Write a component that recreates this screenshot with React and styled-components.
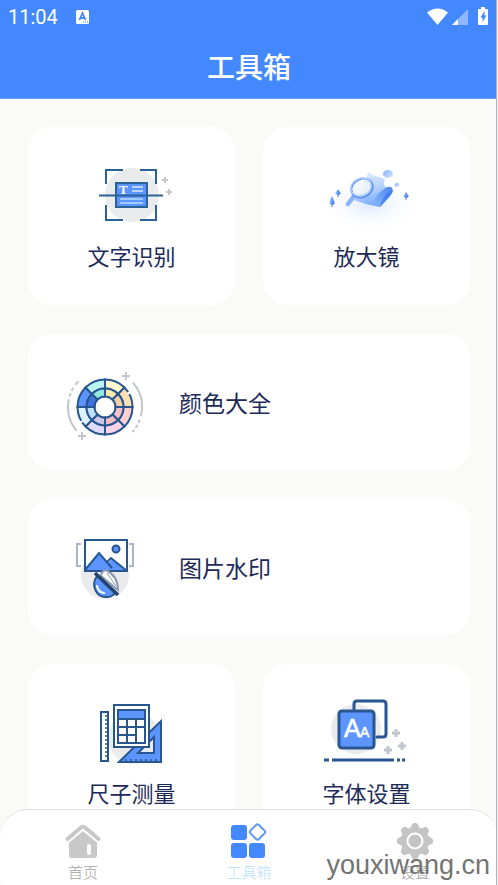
import React from 'react'
import styled, { createGlobalStyle } from 'styled-components'

const BLUE = '#4488ff'
const FILL = '#5c95ff'
const STROKE = '#28568f'
const GREY = '#c3c6cd'
const DISC = '#e9ebed'

const GlobalStyle = createGlobalStyle`
  * {
    box-sizing: border-box;
  }

  body {
    margin: 0;
    background: #fafaf8;
    font-family: 'Noto Sans CJK SC', sans-serif;
  }
`

const Page = styled.div`
  height: 100vh;
  display: flex;
  flex-direction: column;
  overflow: hidden;
  position: relative;
`

const ScreenEdge = styled.div`
  position: absolute;
  top: 0;
  right: 0;
  bottom: 0;
  width: 2px;
  border-left: 1px solid #b4b6ba;
  background: #ececec;
`

const Header = styled.header`
  flex: none;
  background: ${BLUE};
  color: #fff;
  border-bottom: 1px solid #6ea1fd;
`

const StatusBar = styled.div`
  display: flex;
  align-items: center;
  height: 34px;
  padding: 0 10px 0 8px;
`

const Clock = styled.span`
  font: 400 20px/34px Roboto, sans-serif;
  margin-right: 18px;
`

const StatusIcons = styled.div`
  margin-left: auto;
  display: flex;
  align-items: center;
`

const Title = styled.h1`
  margin: 0;
  font-size: 28px;
  font-weight: 500;
  line-height: 64px;
  text-align: center;
`

const Tools = styled.main`
  flex: 1;
  min-height: 0;
  overflow: hidden;
  display: grid;
  grid-template-columns: 1fr 1fr;
  align-content: start;
  gap: 29px 28px;
  padding: 28px;
`

const Card = styled.button`
  display: flex;
  align-items: center;
  border: 0;
  border-radius: 24px;
  background: #fff;
  color: #1d2a58;
  font-family: inherit;
  cursor: pointer;
  grid-column: ${({ $wide }) => ($wide ? 'span 2' : 'auto')};
  flex-direction: ${({ $wide }) => ($wide ? 'row' : 'column')};
  gap: ${({ $wide }) => ($wide ? '24px' : '4px')};
  height: ${({ $wide }) => ($wide ? '136px' : '178px')};
  padding: ${({ $wide }) => ($wide ? '0 28px' : '28px 0 0')};
  font-size: ${({ $wide }) => ($wide ? '23px' : '22px')};
  line-height: 32px;
`

const Art = styled.svg.attrs({ viewBox: '0 0 99 80', 'aria-hidden': true })`
  flex: none;
  width: 99px;
  height: 80px;
  fill: none;
`

const TabBar = styled.nav`
  position: absolute;
  left: 0;
  right: 0;
  bottom: 0;
  display: grid;
  grid-template-columns: repeat(3, 1fr);
  height: 76px;
  border-top: 1px solid #dededf;
  border-radius: 28px 28px 6px 6px;
  background: #fff;
`

const Tab = styled.a`
  display: flex;
  flex-direction: column;
  align-items: center;
  gap: 3px;
  padding-top: 13px;
  font-size: 15px;
  font-weight: 300;
  line-height: 20px;
  text-decoration: none;
  color: ${({ $active }) => ($active ? '#b9e2fb' : '#a3a3a3')};

  svg {
    width: 36px;
    height: 36px;
    fill: none;
  }
`

const Watermark = styled.span`
  position: absolute;
  right: 8px;
  bottom: 4px;
  font: 27px/32px 'Liberation Sans', sans-serif;
  color: #747474;
`

const Plus = ({ x, y, r = 3, w = 2, color = GREY }) => (
  <path d={`M${x - r} ${y}h${2 * r}M${x} ${y - r}v${2 * r}`} stroke={color} strokeWidth={w} />
)

const TextScanArt = () => (
  <Art>
    <circle cx="50" cy="40" r="27" fill={DISC} />
    <rect x="34" y="28" width="31" height="24" fill={FILL} stroke="#2a6298" strokeWidth="2" />
    <path
      d="M24 29V15h17M58 15h16v14M74 50v15H58M41 65H24V50"
      stroke="#2a6298"
      strokeWidth="2"
    />
    <text x="37" y="39" fill="#fff" fontFamily="Liberation Serif, serif" fontWeight="700" fontSize="13">
      T
    </text>
    <path d="M50 32h11M50 36h11" stroke="#d9e7ff" strokeWidth="1.4" />
    <path d="M38 44h23M38 48h23" stroke="#b9dcff" strokeWidth="1.6" />
    <path d="M17 40.500H81" stroke="#2a6298" strokeWidth="2" />
    <Plus x={83} y={25} />
    <Plus x={87} y={37} />
  </Art>
)

const Tree = ({ x, y, h }) => (
  <g>
    <path
      d={`M${x} ${y - h}C${x + 2} ${y - h / 2} ${x + 3} ${y - 2} ${x + 2.5} ${y - 1}Q${x} ${y + 1} ${x - 2.5} ${y - 1}C${x - 3} ${y - 2} ${x - 2} ${y - h / 2} ${x} ${y - h}Z`}
      fill="url(#tree)"
    />
    <path d={`M${x} ${y - 2}v4`} stroke="#4b7bd8" strokeWidth="1" />
  </g>
)

const MagnifierArt = () => (
  <Art>
    <defs>
      <radialGradient id="ground" cx="0.5" cy="0.35" r="0.6">
        <stop offset="0" stopColor="#dbe8ff" />
        <stop offset="1" stopColor="#fff" stopOpacity="0" />
      </radialGradient>
      <linearGradient id="sheet" x1="0.3" y1="0" x2="0.6" y2="1">
        <stop offset="0" stopColor="#e3efff" />
        <stop offset="0.5" stopColor="#b4d0ff" />
        <stop offset="1" stopColor="#6ea2fc" />
      </linearGradient>
      <linearGradient id="roll" x1="1" y1="0" x2="0" y2="1">
        <stop offset="0" stopColor="#4b86f0" />
        <stop offset="1" stopColor="#8ab8ff" />
      </linearGradient>
      <linearGradient id="ball" x1="0" y1="0" x2="1" y2="1">
        <stop offset="0" stopColor="#7faefb" />
        <stop offset="1" stopColor="#deeaff" />
      </linearGradient>
      <linearGradient id="tree" x1="0" x2="1">
        <stop offset="0" stopColor="#9cc2ff" />
        <stop offset="1" stopColor="#3e79ea" />
      </linearGradient>
    </defs>
    <ellipse cx="53" cy="56" rx="42" ry="24" fill="url(#ground)" />
    <path d="M51 17Q59 22 68 24Q64 34 74 32L63 52Q50 50 37 45Q46 36 51 17Z" fill="url(#sheet)" />
    <path d="M57 47Q59 39 66 35Q70 31 74 32Q77 34 75 38Q72 43 63 52Q58 51 57 47Z" fill="url(#roll)" />
    <path d="M63 52Q66 39 75 35Q77 36 73 41Z" fill="#3a77e8" opacity="0.7" />
    <path d="M52 23l12 3M55 27l8 2" stroke="#c6dbff" strokeWidth="1" />
    <path d="M37 41l-6 8" stroke="#8ab4fb" strokeWidth="4.500" strokeLinecap="round" />
    <ellipse cx="45" cy="33" rx="11" ry="9" transform="rotate(-24 45 33)" fill="#f1f6ff" fillOpacity="0.85" stroke="#5e93ef" strokeWidth="2" />
    <ellipse cx="44" cy="32" rx="10.500" ry="8.500" transform="rotate(-24 44 32)" stroke="#b3cffe" strokeWidth="1.500" />
    <ellipse cx="71" cy="19" rx="5" ry="4" fill="url(#ball)" />
    <ellipse cx="80" cy="30" rx="2.500" ry="2" fill="url(#ball)" />
    <Tree x={15} y={50} h={9} />
    <Tree x={21} y={40} h={6} />
    <Tree x={89} y={43} h={6} />
  </Art>
)

const polar = (r, deg) => {
  const a = ((deg - 90) * Math.PI) / 180
  return `${49 + r * Math.cos(a)} ${45 + r * Math.sin(a)}`
}

const sector = (r1, r2, from, to) =>
  `M${polar(r1, from)}L${polar(r2, from)}A${r2} ${r2} 0 0 1 ${polar(r2, to)}L${polar(r1, to)}A${r1} ${r1} 0 0 0 ${polar(r1, from)}Z`

const arc = (r, from, to) => `M${polar(r, from)}A${r} ${r} 0 0 1 ${polar(r, to)}`

const wheel = [
  ['#fff9d0', '#fbe9ae'],
  ['#ffe0b5', '#f8cf9e'],
  ['#ffcfd2', '#f6c0c4'],
  ['#ffd2ea', '#f5bcc9'],
  ['#dfdaf8', '#d0c6ea'],
  ['#d9f4ff', '#bfe0fa'],
  ['#5c95ff', '#3f73dd'],
  ['#b8f4f0', '#93e8de']
]

const ColorWheelArt = () => (
  <Art>
    {wheel.map(([outer, inner], i) => (
      <g key={outer} stroke={STROKE} strokeWidth="2">
        <path d={sector(18.5, 27.5, i * 45, i * 45 + 45)} fill={outer} />
        <path d={sector(10.5, 18.5, i * 45, i * 45 + 45)} fill={inner} />
      </g>
    ))}
    <path d={arc(27.5, 57, 62) + arc(27.5, 236, 240)} stroke="#fff" strokeWidth="3" />
    <g stroke={GREY} strokeWidth="2" strokeLinecap="round">
      <path d={arc(37, 50, 103) + arc(37, 231, 281)} />
      <path d={arc(37, 111, 114) + arc(37, 120, 123) + arc(37, 129, 131)} />
      <path d={arc(37, 288, 291) + arc(37, 297, 300) + arc(37, 308, 313)} />
    </g>
    <Plus x={70} y={14} r={4} />
    <Plus x={26} y={74} r={4} />
  </Art>
)

const WatermarkArt = () => (
  <Art>
    <circle cx="49" cy="48" r="24" fill={DISC} />
    <path d="M25 17h-4v22h4M73 17h4v22h-4" stroke="#a9b5c9" strokeWidth="2" />
    <rect x="29" y="13" width="42" height="31" fill="#fff" />
    <path d="M29 43L43 26l9 10 4-4 15 11v1H29Z" fill={FILL} />
    <path d="M29 43L43 26l13 15M51 35l4-4 16 13" stroke={STROKE} strokeWidth="2" />
    <circle cx="60" cy="22" r="3.500" fill={FILL} stroke={STROKE} strokeWidth="2" />
    <rect x="29" y="13" width="42" height="31" stroke={STROKE} strokeWidth="2" />
    <path d="M41 49C34 59 41 71 51 70q5 0 8-4Z" fill={FILL} stroke={STROKE} strokeWidth="2" />
    <path d="M41 59q1 6 7 7" stroke="#fff" strokeWidth="2" strokeLinecap="round" />
    <path d="M45 49q0-5 5-6c6 3 12 9 12 20Z" fill="#fff" stroke="#8898b4" strokeWidth="2" />
    <path d="M51 46l9 13" stroke="#8898b4" strokeWidth="1" />
    <path d="M39 46l23 22" stroke="#24446f" strokeWidth="3.500" />
  </Art>
)

const RulerArt = () => (
  <Art>
    <circle cx="52" cy="46" r="26" fill={DISC} />
    <g stroke={STROKE} strokeWidth="2">
      <path d="M79 29v41H37Z" fill={FILL} />
      <path d="M72 45v16H56Z" fill={DISC} />
      <path d="M44 70v-3M49 70v-3M54 70v-3M59 70v-3M64 70v-3M69 70v-3M74 70v-3" strokeWidth="1.500" />
      <rect x="19" y="20" width="7" height="49" fill="#fff" />
      <path
        d="M26 24h-3M26 28h-3M26 32h-3M26 36h-3M26 40h-3M26 44h-3M26 48h-3M26 52h-3M26 56h-3M26 60h-3M26 64h-3"
        strokeWidth="1.500"
      />
      <rect x="32" y="13" width="35" height="42" fill="#fff" />
      <rect x="36" y="18" width="27" height="9" fill={FILL} />
      <path d="M36 27v24h27V27M36 35h27M36 43h18M45 27v24M54 27v24" />
    </g>
  </Art>
)

const FontArt = () => (
  <Art>
    <circle cx="39" cy="37" r="25" fill={DISC} />
    <path
      d="M37 17v-5q0-3 3-3h26q3 0 3 3v30q0 3-3 3h-6"
      stroke={STROKE}
      strokeWidth="3"
      strokeLinecap="round"
    />
    <rect x="22" y="19" width="35" height="37" rx="3" fill={FILL} stroke={STROKE} strokeWidth="3" />
    <g fill="#fff" stroke="#fff" fontFamily="Liberation Sans, sans-serif">
      <text x="27" y="45" fontSize="25" strokeWidth="0.600">A</text>
      <text x="43" y="45" fontSize="14" strokeWidth="0.500">A</text>
    </g>
    <path d="M7 68h5M15 68h62M80 68h3M85 68h3" stroke={STROKE} strokeWidth="3" />
    <Plus x={79} y={41} r={4} w={3} />
    <Plus x={85} y={54} r={4} w={3} />
    <Plus x={71} y={58} r={4} w={3} />
  </Art>
)

const HomeIcon = () => (
  <svg viewBox="0 0 36 36" aria-hidden="true">
    <path d="M2.500 16L16 4.500q2-1.500 4 0L33.500 16" stroke="#c8c8c8" strokeWidth="4" strokeLinecap="round" />
    <path d="M4 19.500L18 8l14 11.500V32q0 3-3 3H7q-3 0-3-3Z" fill="#c8c8c8" />
    <path d="M3.500 19L18 7.500L32.500 19" stroke="#fff" strokeWidth="1" />
    <rect x="22" y="21" width="4" height="11" rx="2" fill="#fff" />
  </svg>
)

const ToolboxIcon = () => (
  <svg viewBox="0 0 36 36" aria-hidden="true">
    <g fill={BLUE}>
      <rect x="0" y="2" width="16" height="15" rx="3" />
      <rect x="0" y="20" width="16" height="15" rx="3" />
      <rect x="18" y="20" width="16" height="15" rx="3" />
    </g>
    <rect
      x="20.500"
      y="3"
      width="12"
      height="12"
      rx="2"
      transform="rotate(45 26.500 9)"
      stroke="#5d98fb"
      strokeWidth="2"
    />
  </svg>
)

const GearIcon = () => (
  <svg viewBox="0 0 36 36" aria-hidden="true">
    <circle cx="18" cy="18" r="14" fill="#c4c4c4" />
    {[0, 45, 90, 135, 180, 225, 270, 315].map(a => (
      <path
        key={a}
        d="M11 7Q14 5 14.500 2.500Q15 0 17 0h2q2 0 2.500 2.500Q22 5 25 7Z"
        transform={`rotate(${a} 18 18)`}
        fill="#c4c4c4"
      />
    ))}
    <circle cx="18" cy="18" r="7.500" stroke="#fff" strokeWidth="2" />
  </svg>
)

const tools = [
  { name: '文字识别', Picture: TextScanArt },
  { name: '放大镜', Picture: MagnifierArt },
  { name: '颜色大全', Picture: ColorWheelArt, wide: true },
  { name: '图片水印', Picture: WatermarkArt, wide: true },
  { name: '尺子测量', Picture: RulerArt },
  { name: '字体设置', Picture: FontArt }
]

const tabs = [
  { name: '首页', href: '#home', Icon: HomeIcon },
  { name: '工具箱', href: '#tools', Icon: ToolboxIcon, active: true },
  { name: '设置', href: '#settings', Icon: GearIcon }
]

const App = () => (
  <Page>
    <GlobalStyle />
    <Header>
      <StatusBar>
        <Clock>11:04</Clock>
        <svg width="14" height="16" viewBox="0 0 14 16" aria-hidden="true">
          <rect x="0" y="1" width="13" height="14" rx="1.500" fill="#fff" />
          <path d="M3.500 11L6.500 4L9.500 11M4.500 9h4" stroke={BLUE} strokeWidth="1.800" fill="none" />
          <path d="M7 13h5" stroke={BLUE} strokeDasharray="1 1" />
        </svg>
        <StatusIcons>
          <svg width="61" height="20" viewBox="0 0 61 20" aria-hidden="true" fill="#fff">
            <path d="M0 5.500Q10.500-2.500 21 5.500L10.500 18Z" />
            <path d="M41 2v16H25Z" opacity="0.4" />
            <path d="M31 12v6h-6Z" />
            <path d="M54 0h4v2h2q1 0 1 1v14q0 1-1 1h-8q-1 0-1-1V3q0-1 1-1h2Z" />
            <path d="M57.500 4L53.500 10.500h2V15l4-6.500h-2Z" fill={BLUE} />
          </svg>
        </StatusIcons>
      </StatusBar>
      <Title>工具箱</Title>
    </Header>
    <Tools>
      {tools.map(({ name, Picture, wide }) => (
        <Card key={name} type="button" $wide={wide}>
          <Picture />
          {name}
        </Card>
      ))}
    </Tools>
    <TabBar>
      {tabs.map(({ name, href, Icon, active }) => (
        <Tab key={name} href={href} $active={active} aria-current={active ? 'page' : undefined}>
          <Icon />
          {name}
        </Tab>
      ))}
    </TabBar>
    <ScreenEdge />
    <Watermark>youxiwang.cn</Watermark>
  </Page>
)

export default App
